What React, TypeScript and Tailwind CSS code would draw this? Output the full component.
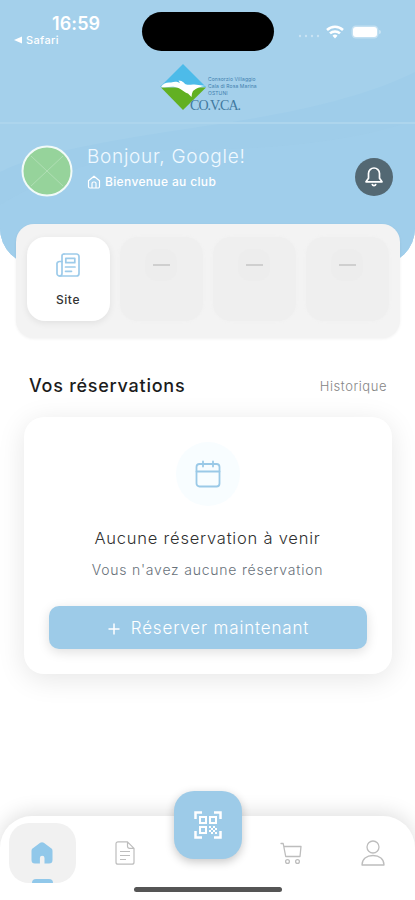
import type { ReactNode } from "react";

function StatusBar() {
  return (
    <div className="flex h-[56px] pt-3">
      <div className="w-[142px] pl-[14px] text-white">
        <p className="pl-[38px] text-[18px] font-semibold leading-[23px] tracking-[0.1px]">16:59</p>
        <p className="flex items-center text-[11px] font-medium leading-[10px] tracking-[0.35px]">
          <svg viewBox="0 0 8 8" className="mr-1 h-2 w-2" fill="currentColor">
            <path d="M8 .5v7L0 4z" />
          </svg>
          Safari
        </p>
      </div>
      <div className="h-[39px] w-[132px] rounded-full bg-black" />
      <div className="flex h-[39px] items-center pl-6 text-white">
        <svg viewBox="0 0 22 4" className="mt-2 h-1 w-[22px] opacity-40" fill="currentColor">
          <circle cx="2" cy="2" r="1.2" />
          <circle cx="8" cy="2" r="1.2" />
          <circle cx="14" cy="2" r="1.2" />
          <circle cx="20" cy="2" r="1.2" />
        </svg>
        <svg viewBox="0 0 18 14" className="ml-[6px] h-[14px] w-[18px]" fill="none" stroke="currentColor" strokeWidth="2.500">
          <path d="M1 5a11.500 11.500 0 0 1 16 0" />
          <path d="M4 8.400a7.200 7.200 0 0 1 10 0" />
          <path d="M6.500 10.800a3.600 3.600 0 0 1 5 0L9 13.600z" fill="currentColor" stroke="none" />
        </svg>
        <div className="ml-[9px] h-[10px] w-6 rounded-[3px] bg-white shadow-[0_0_0_1.5px_rgba(255,255,255,0.35)]" />
        <div className="ml-[2px] h-1 w-[2px] rounded-r bg-white/40" />
      </div>
    </div>
  );
}

function ClubLogo() {
  return (
    <div className="flex h-[66px] pl-[160px] pt-[7px]">
      <svg viewBox="0 0 48 48" className="h-12 w-12 shrink-0">
        <path d="M23 1 46 24H0z" fill="#4dbbe9" />
        <path d="M1 24.500h45L23 47z" fill="#62b022" />
        <path
          d="M1 24c2-4 6-5 10-4.500 3-.5 5-1.500 9 .5l-1.500-2.500c5 0 5.500 3.500 8 4 3 .8 5-.5 8 0l4 .5 7 1c-5 .5-9 2-12.500 5l-1 2.500-.5 3.500-3.500-3.500c-4-1-7-5.500-13-6.500-5-.8-9 1-14 0z"
          fill="#fff"
        />
      </svg>
      <div className="pt-[13px]">
        <p className="text-[5px] leading-[7px] tracking-[0.1px] text-[#3f7fae]">
          Consorzio Villaggio
          <br />
          Cala di Rosa Marina
          <br />
          OSTUNI
        </p>
        <p className="-ml-[18px] font-['Liberation_Serif',serif] text-[14px] leading-[18px] tracking-[-0.95px] text-[#41799f]">
          CO.V.CA.
        </p>
      </div>
    </div>
  );
}

function Welcome() {
  return (
    <div className="flex pt-[21px]">
      <svg viewBox="0 0 52 52" className="ml-[21px] h-[52px] w-[52px] shrink-0">
        <circle cx="26" cy="26" r="24.500" fill="#96d39b" stroke="#f1faf8" strokeWidth="2" />
        <path d="m10 11 32 30M42 11 10 41" stroke="#b0dfb4" strokeWidth="1" />
      </svg>
      <div className="ml-[14px] w-[268px] text-white">
        <h1 className="text-[19px] font-light leading-6 tracking-[0.72px] text-[#f0f9ff]">Bonjour, Google!</h1>
        <p className="mt-[3px] flex items-center text-[12px] font-medium leading-[20px] tracking-[0.35px]">
          <svg viewBox="0 0 14 14" className="mr-1 h-[14px] w-[14px]" fill="none" stroke="currentColor" strokeWidth="1.200" strokeLinejoin="round">
            <path d="M1.500 5.800 7 1.200l5.500 4.600v5.700a1.500 1.500 0 0 1-1.500 1.500H3a1.500 1.500 0 0 1-1.500-1.500z" />
            <path d="M5 13V8.500A1.500 1.500 0 0 1 6.500 7h1A1.500 1.500 0 0 1 9 8.500V13" />
          </svg>
          Bienvenue au club
        </p>
      </div>
      <button className="mt-[13px] flex h-[38px] w-[38px] items-center justify-center rounded-full bg-[#536873]">
        <svg viewBox="0 0 20 22" className="h-[22px] w-5" fill="none" stroke="white" strokeWidth="1.700" strokeLinejoin="round" strokeLinecap="round">
          <path d="M10 2a5.500 5.500 0 0 0-5.500 5.500v4.700L2 15.800h16l-2.500-3.600V7.500A5.500 5.500 0 0 0 10 2z" />
          <path d="M8.300 18.500c.4 1.500 3 1.500 3.400 0" />
        </svg>
      </button>
    </div>
  );
}

function EmptyTile() {
  return (
    <div className="flex h-[84px] w-[83px] justify-center rounded-[18px] bg-[#efefef] pt-3 shadow-[0_0_4px_#f0f0f0]">
      <div className="flex h-8 w-8 items-center justify-center rounded-[12px] bg-[#ededed]">
        <div className="h-[2px] w-[17px] bg-[#cfcfcf]" />
      </div>
    </div>
  );
}

function Shortcuts() {
  return (
    <div className="relative mx-auto -mt-[41px] flex h-[114px] w-[384px] gap-[10px] rounded-[18px] bg-[#f3f3f3] pl-[11px] pt-[13px] shadow-[0_1px_3px_rgba(0,0,0,0.06)]">
      <div className="flex h-[84px] w-[83px] flex-col items-center rounded-[18px] bg-white pt-4 shadow-[0_2px_7px_rgba(0,0,0,0.08)]">
        <svg viewBox="0 0 24 24" className="h-6 w-6" fill="none" stroke="#9dcbea" strokeWidth="1.700" strokeLinecap="round" strokeLinejoin="round">
          <path d="M8 1h12.500A2.500 2.500 0 0 1 23 3.500v17a2.500 2.500 0 0 1-2.500 2.500H3.500A2.500 2.500 0 0 1 1 20.500v-9A2.500 2.500 0 0 1 3.500 8.500H6" />
          <path d="M8 1a2 2 0 0 0-2 2v17.500A2.500 2.500 0 0 1 3.500 23" />
          <path d="M9.800 5.300h9v4.400h-9zM9.500 14H19M9.500 18.300h6" />
        </svg>
        <span className="mt-[15px] text-[12px] font-medium leading-4 tracking-[0.6px] text-[#333]">Site</span>
      </div>
      <EmptyTile />
      <EmptyTile />
      <EmptyTile />
    </div>
  );
}

function Reservations() {
  return (
    <section className="pt-[36px]">
      <div className="flex items-center justify-between pl-[29px] pr-[28px]">
        <h2 className="text-[18px] font-medium leading-6 tracking-[0.75px] text-[#1c1c1c]">Vos réservations</h2>
        <a className="text-[13px] font-light leading-5 tracking-[0.55px] text-[#868686]">Historique</a>
      </div>
      <div className="mx-auto mt-[19px] flex h-[257px] w-[368px] flex-col items-center rounded-[20px] bg-white pt-[25px] shadow-[0_5px_28px_rgba(0,0,0,0.1)]">
        <div className="flex h-16 w-16 items-center justify-center rounded-full bg-[#f8fdff]">
          <svg viewBox="0 0 26 28" className="h-7 w-[26px]" fill="none" stroke="#9ac9e7" strokeWidth="1.800" strokeLinecap="round">
            <rect x="1.500" y="4" width="23" height="22.500" rx="3" />
            <path d="M1.500 11.500h23M8 1.500v5M18 1.500v5" />
          </svg>
        </div>
        <h3 className="mt-[20px] text-[16.500px] font-light leading-6 tracking-[0.78px] text-[#303030]">Aucune réservation à venir</h3>
        <p className="mt-[9px] text-[14px] font-light leading-[22px] tracking-[0.78px] text-[#68717a]">Vous n'avez aucune réservation</p>
        <button className="mt-[25px] flex h-[43px] w-[318px] items-center justify-center rounded-[10px] bg-[#9dcbe8] pl-[2px] pt-[2px] text-[17px] font-light tracking-[0.83px] text-white shadow-[0_3px_12px_rgba(0,0,0,0.13)]">
          <svg viewBox="0 0 12 12" className="mr-[11px] h-3 w-3" stroke="currentColor" strokeWidth="1.500">
            <path d="M6 .5v11M.5 6h11" />
          </svg>
          Réserver maintenant
        </button>
      </div>
    </section>
  );
}

function NavItem({ children }: { children: ReactNode }) {
  return <a className="flex h-[60px] w-[67px] items-center justify-center text-[#bdbdbd]">{children}</a>;
}

function BottomNav() {
  return (
    <nav className="relative mt-auto h-[84px] rounded-t-[32px] bg-white shadow-[0_-3px_20px_rgba(0,0,0,0.13)]">
      <div className="flex gap-[15.7px] pl-[9px] pt-[7px]">
        <a className="flex h-[60px] w-[67px] flex-col items-center rounded-[20px] bg-[#f1f1f1] pr-px pt-[19px]">
          <svg viewBox="0 0 22 22" className="h-[22px] w-[22px]" fill="#91c8ea">
            <path d="M9.200.8a3 3 0 0 1 3.600 0l7 5.300A3 3 0 0 1 21.500 9v9a3.500 3.500 0 0 1-3.500 3.500h-4.500V16a2.300 2.300 0 0 0-4.600 0v5.500H4A3.500 3.500 0 0 1 .5 18V9a3 3 0 0 1 1.700-2.900z" />
          </svg>
          <span className="mt-[15px] h-1 w-[21px] rounded-t bg-[#91c8ea]" />
        </a>
        <NavItem>
          <svg viewBox="0 0 20 24" className="h-6 w-5" fill="none" stroke="currentColor" strokeWidth="1.200" strokeLinejoin="round">
            <path d="M12.500.8H3A2 2 0 0 0 1 2.800v18.400a2 2 0 0 0 2 2h14a2 2 0 0 0 2-2V7.300zM12.500.8v4.500a2 2 0 0 0 2 2H19" />
            <path d="M5 10.500h10M5 14.500h10M5 18.500h6" />
          </svg>
        </NavItem>
        <div className="w-[67px]" />
        <NavItem>
          <svg viewBox="0 0 22 24" className="h-6 w-[22px]" fill="none" stroke="currentColor" strokeWidth="1.300" strokeLinecap="round" strokeLinejoin="round">
            <path d="M1 2.500h2.200L5.700 15.500h14.300L21 5.500H3.800" />
            <circle cx="7.500" cy="20.500" r="1.900" />
            <circle cx="17.500" cy="20.500" r="1.900" />
          </svg>
        </NavItem>
        <NavItem>
          <svg viewBox="0 0 24 26" className="h-[26px] w-6" fill="none" stroke="currentColor" strokeWidth="1.300" strokeLinejoin="round">
            <circle cx="12" cy="7" r="6" />
            <path d="M1 25c0-6 4.500-9.500 11-9.500S23 19 23 25z" />
          </svg>
        </NavItem>
      </div>
      <button className="absolute -top-[25px] left-[174px] flex h-[68px] w-[68px] items-center justify-center rounded-[20px] bg-[#9dcbe8] shadow-[0_3px_10px_rgba(0,0,0,0.22)]">
        <svg viewBox="0 0 28 28" className="h-7 w-7" fill="none" stroke="white" strokeWidth="2">
          <path d="M1.500 8V1.500H8M20 1.500h6.500V8M26.500 20v6.500H20M8 26.500H1.500V20" strokeWidth="2.500" />
          <path d="M6 6h6v6H6zM16 6h6v6h-6zM6 16h6v6H6z" />
          <path
            d="M15 15h2v2h-2zm4 0h2v2h-2zm-2 2h2v2h-2zm4 0h2v2h-2zm-6 2h2v2h-2zm4 0h2v2h-2zm-2 2h2v2h-2zm4 0h2v2h-2z"
            fill="white"
            stroke="none"
          />
        </svg>
      </button>
      <div className="absolute bottom-[8px] left-[134px] h-[5px] w-[148px] rounded-full bg-[#555555]" />
    </nav>
  );
}

export default function App() {
  return (
    <div className="flex h-[900px] w-[415px] flex-col overflow-hidden bg-white font-['Inter',sans-serif]">
      <header className="relative h-[265px] shrink-0 overflow-hidden rounded-b-[37px] bg-[#a4d0eb]">
        <svg viewBox="0 0 415 265" className="absolute inset-0 h-[265px] w-[415px]">
          <path d="M0 172C45 149 140 136 205 126c90-13 160-29 210-54v193H0z" fill="#9fcdea" />
          <path d="M0 265v-60c60-35 120-55 180-55 100 0 180-10 235-30v145z" fill="#a1cfeb" opacity=".6" />
        </svg>
        <div className="relative">
          <StatusBar />
          <ClubLogo />
          <div className="h-[2px] bg-[#add5ed]" />
          <Welcome />
        </div>
      </header>
      <Shortcuts />
      <Reservations />
      <BottomNav />
    </div>
  );
}
